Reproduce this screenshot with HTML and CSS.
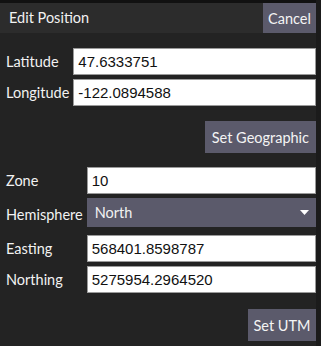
FILE: index.html
```html
<!DOCTYPE html>
<html>
<head>
  <title>Edit Position</title>
  <link rel="stylesheet" href="styles.css">
</head>
<body>

  <div class="panel">
    <div class="header">
      <span class="title">Edit Position</span>
      <button class="btn cancel">Cancel</button>
    </div>

    <div class="content">
      <div class="fields">
        <label>Latitude</label>
        <input type="text" value="47.6333751">
        <label>Longitude</label>
        <input type="text" value="-122.0894588">
      </div>
      <div class="button-row">
        <button class="btn">Set Geographic</button>
      </div>

      <div class="fields utm">
        <label>Zone</label>
        <input type="text" value="10">
        <label>Hemisphere</label>
        <div class="select">
          <span>North</span>
          <svg width="9" height="6" viewBox="0 0 9 6"><path d="M0 0 L9 0 L4.5 5 Z" fill="#fff"/></svg>
        </div>
        <label>Easting</label>
        <input type="text" value="568401.8598787">
        <label>Northing</label>
        <input type="text" value="5275954.2964520">
      </div>
      <div class="button-row">
        <button class="btn utm-btn">Set UTM</button>
      </div>
    </div>
  </div>

</body>
</html>
```

FILE: styles.css
```css
body {
  margin: 0;
  background: #1b1b1b;
  font-family: Lato, "Open Sans", sans-serif;
  color: #f2f2f2;
}

.panel {
  width: 316px;
  height: 346px;
  box-sizing: border-box;
  border-top: 3px solid #111;
  background: #232323;
}

.header {
  display: flex;
  align-items: stretch;
  height: 30px;
  background: #2c2c2c;
}

.title {
  flex: 1;
  padding-left: 9px;
  font-size: 14.5px;
  line-height: 30px;
}

.btn {
  border: none;
  background: #5b5a6b;
  color: #f4f4f4;
  font-family: Lato, "Open Sans", sans-serif;
  font-size: 14.5px;
  padding: 0 7px;
  cursor: pointer;
}

.cancel {
  width: 53px;
  padding: 0;
}

.content {
  padding: 15px 0 0 6px;
}

.fields {
  display: grid;
  grid-template-columns: auto 1fr;
  column-gap: 4px;
  row-gap: 4px;
  align-items: center;
}

.fields label {
  font-size: 14.5px;
}

.fields input {
  height: 27px;
  box-sizing: border-box;
  margin: 0;
  border: 1px solid #9a9a9a;
  padding: 0 4px;
  background: #fff;
  font-family: "Liberation Sans", Arial, sans-serif;
  font-size: 15px;
  color: #111;
}

.button-row {
  display: flex;
  justify-content: flex-end;
  margin-top: 15px;
}

.button-row .btn {
  height: 32px;
}

.utm {
  margin-top: 14px;
}

.select {
  display: flex;
  align-items: center;
  justify-content: space-between;
  height: 29px;
  padding: 0 7px 0 8px;
  background: #5b5a6b;
  font-size: 14.5px;
  margin-bottom: 4px;
}

.utm-btn {
  width: 68px;
  padding: 0;
  margin-top: 1px;
}
```
